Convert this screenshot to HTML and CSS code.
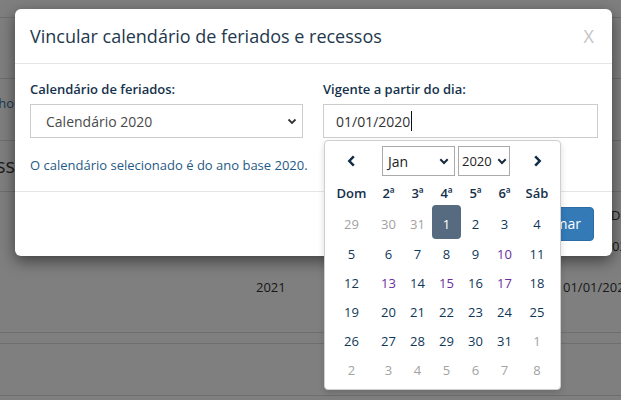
FILE: index.html
```html
<!DOCTYPE html>
<html lang="pt-BR">
<head>
<meta charset="utf-8">
<title>Vincular calendário</title>
<link rel="stylesheet" href="styles.css">
</head>
<body>
<div class="page">
  <div class="bg-row r1"></div>
  <div class="bg-row r2"></div>
  <div class="bg-row r3"><div class="clip link">Horário de trabalho</div></div>
  <div class="bg-row r4"><div class="clip heading">Feriados e recess</div></div>
  <div class="bg-row r5">
    <div class="bg-grid">
      <div></div><div></div><div class="c3 p50">Data</div>
      <div></div><div></div><div class="c3 p49">02/2020</div>
      <div class="tall"></div><div class="tall">2021</div><div class="tall c3">01/01/2020</div>
    </div>
  </div>
  <div class="bg-row r6"></div>
  <div class="bg-row r7"></div>
</div>

<div class="backdrop"></div>

<div class="modal">
  <div class="modal-header">
    <h4 class="modal-title">Vincular calendário de feriados e recessos</h4>
    <span class="close">X</span>
  </div>
  <div class="modal-body">
    <div class="form-row">
      <div class="field">
        <label class="label">Calendário de feriados:</label>
        <div class="select">
          <span>Calendário 2020</span>
          <svg class="chev" width="10" height="7" viewBox="0 0 10 7"><path d="M1.5 1.5 L5 5 L8.5 1.5" fill="none" stroke="#333" stroke-width="1.8"/></svg>
        </div>
      </div>
      <div class="field">
        <label class="label">Vigente a partir do dia:</label>
        <div class="input-wrap">
          <div class="input"><span>01/01/2020</span><span class="caret"></span></div>
          <div class="datepicker">
            <div class="dp-head">
              <span class="dp-nav prev">
                <svg width="9" height="12" viewBox="0 0 9 12"><path d="M6.8 1.3 L2.3 6 L6.8 10.7" fill="none" stroke="#0f2b45" stroke-width="2.5"/></svg>
              </span>
              <div class="dp-select month"><span>Jan</span>
                <svg width="10" height="7" viewBox="0 0 10 7"><path d="M1.3 1.3 L5 5 L8.7 1.3" fill="none" stroke="#172a3d" stroke-width="2"/></svg>
              </div>
              <div class="dp-select year"><span>2020</span>
                <svg width="10" height="7" viewBox="0 0 10 7"><path d="M1.3 1.3 L5 5 L8.7 1.3" fill="none" stroke="#172a3d" stroke-width="2"/></svg>
              </div>
              <span class="dp-nav next">
                <svg width="9" height="12" viewBox="0 0 9 12"><path d="M2.2 1.3 L6.7 6 L2.2 10.7" fill="none" stroke="#0f2b45" stroke-width="2.5"/></svg>
              </span>
            </div>
            <div class="dp-grid dp-week">
              <span>Dom</span><span>2ª</span><span>3ª</span><span>4ª</span><span>5ª</span><span>6ª</span><span>Sáb</span>
            </div>
            <div class="dp-grid dp-days">
              <span class="first old">29</span><span class="first old">30</span><span class="first old">31</span><span class="first sel">1</span><span class="first">2</span><span class="first">3</span><span class="first">4</span>
              <span>5</span><span>6</span><span>7</span><span>8</span><span>9</span><span class="hol">10</span><span>11</span>
              <span>12</span><span class="hol">13</span><span>14</span><span class="hol">15</span><span>16</span><span class="hol">17</span><span>18</span>
              <span>19</span><span>20</span><span>21</span><span>22</span><span>23</span><span>24</span><span>25</span>
              <span>26</span><span>27</span><span>28</span><span>29</span><span>30</span><span>31</span><span class="old">1</span>
              <span class="old">2</span><span class="old">3</span><span class="old">4</span><span class="old">5</span><span class="old">6</span><span class="old">7</span><span class="old">8</span>
            </div>
          </div>
        </div>
      </div>
    </div>
    <p class="note">O calendário selecionado é do ano base 2020.</p>
  </div>
  <div class="modal-footer">
    <button class="btn btn-primary">Confirmar</button>
  </div>
</div>
</body>
</html>
```

FILE: styles.css
```css
* { box-sizing: border-box; }

body {
  margin: 0;
  width: 621px;
  height: 400px;
  overflow: hidden;
  position: relative;
  background: #fff;
  font-family: "Open Sans", "Noto Sans", sans-serif;
  color: #333;
}

/* underlying page */
.page { display: flex; flex-direction: column; }
.bg-row { border-bottom: 1px solid #dcdcdc; }
.r1 { height: 18px; }
.r2 { height: 61px; }
.r3 { height: 62px; padding-top: 15px; }
.r4 { height: 51px; padding-top: 12px; }
.r5 { height: 141px; padding-top: 8px; }
.r6 { height: 11px; }
.r7 { height: 52px; }

.clip {
  width: 14px;
  overflow: hidden;
  display: flex;
  justify-content: flex-end;
  white-space: nowrap;
}
.link { font-size: 13px; line-height: 18px; color: #3a6f9c; }
.heading { font-size: 20px; line-height: 26px; color: #3a3a3a; width: 15px; }

.bg-grid {
  display: grid;
  grid-template-columns: 256px 307px 58px;
  grid-template-rows: 30px 31px 52px;
  font-size: 13px;
  line-height: 18px;
  color: #333;
  align-items: center;
}
.bg-grid > div { white-space: nowrap; overflow: hidden; }
.p50 { padding-left: 48px; }
.p49 { padding-left: 49px; }

.backdrop {
  position: absolute;
  inset: 0;
  background: rgba(0, 0, 0, 0.5);
}

/* modal */
.modal {
  position: absolute;
  left: 15px;
  top: 9px;
  width: 597px;
  background: #fff;
  border-radius: 6px;
  box-shadow: 0 5px 15px rgba(0, 0, 0, 0.5);
}

.modal-header {
  display: flex;
  justify-content: space-between;
  align-items: center;
  padding: 14px 18px 14px 15px;
  border-bottom: 1px solid #e5e5e5;
}
.modal-title {
  margin: 0;
  font-size: 18px;
  line-height: 26px;
  font-weight: 400;
  color: #23384d;
}
.close {
  font-size: 18px;
  line-height: 26px;
  color: #c4c4c4;
}

.modal-body { padding: 16px 14px 17px 15px; }
.form-row {
  display: grid;
  grid-template-columns: 273px 275px;
  column-gap: 20px;
}
.label {
  display: block;
  font-size: 13px;
  line-height: 18px;
  font-weight: 600;
  color: #15324d;
  margin-bottom: 6px;
}
.select, .input {
  height: 34px;
  border: 1px solid #ccc;
  display: flex;
  align-items: center;
  font-size: 14px;
  color: #555;
}
.select {
  justify-content: space-between;
  padding: 0 5px 0 15px;
  color: #4a4a4a;
}
.input { padding: 0 12px; color: #333; }
.caret {
  display: inline-block;
  width: 1px;
  height: 20px;
  background: #111;
  margin-left: 1px;
}

.input-wrap { position: relative; }

.note {
  margin: 18px 0 0;
  font-size: 13px;
  line-height: 18px;
  color: #1f5a86;
}

.modal-footer {
  display: flex;
  justify-content: flex-end;
  padding: 15px 18px 15px 15px;
  border-top: 1px solid #e5e5e5;
}
.btn {
  font-family: inherit;
  font-size: 14px;
  line-height: 20px;
  padding: 6px 12px;
  border-radius: 4px;
  border: 1px solid #ccc;
  background: #fff;
  color: #333;
}
.btn-primary {
  background: #337ab7;
  border-color: #2e6da4;
  color: #fff;
}

/* datepicker dropdown */
.datepicker {
  position: absolute;
  top: calc(100% + 2px);
  left: 1px;
  width: 237px;
  padding: 5px 5px 5px 4px;
  background: #fff;
  border: 1px solid #cfcfcf;
  border-radius: 4px;
  box-shadow: 0 3px 6px rgba(0, 0, 0, 0.15);
}
.dp-head {
  display: flex;
  align-items: center;
  height: 30px;
}
.dp-nav {
  display: flex;
  justify-content: center;
  align-items: center;
}
.prev { width: 45px; margin-right: 8px; }
.next { width: 36px; margin-left: 9px; }
.dp-select {
  height: 30px;
  border: 1px solid #aaa;
  display: flex;
  align-items: center;
  justify-content: space-between;
  color: #222;
}
.month { width: 73px; padding: 0 5px 0 5px; font-size: 14px; margin-right: 3px; }
.year { width: 52px; padding: 0 2px 0 3px; font-size: 13px; }

.dp-grid {
  display: grid;
  grid-template-columns: 45px 29px 29px 29px 29px 29px 36px;
  text-align: center;
}
.dp-week {
  height: 24px;
  margin-top: 5px;
  align-items: center;
  font-size: 13px;
  font-weight: 600;
  color: #142f4b;
}
.dp-days {
  grid-template-rows: 34px repeat(5, 29px);
  font-size: 13px;
  color: #0f3758;
}
.dp-days span {
  display: flex;
  align-items: center;
  justify-content: center;
}
.dp-days .first { padding-top: 4px; }
.dp-days .old { color: #a2a2a2; }
.dp-days .hol { color: #6a2d9c; }
.dp-days .sel {
  background: #566b80;
  color: #fff;
  border-radius: 4px;
}
```
